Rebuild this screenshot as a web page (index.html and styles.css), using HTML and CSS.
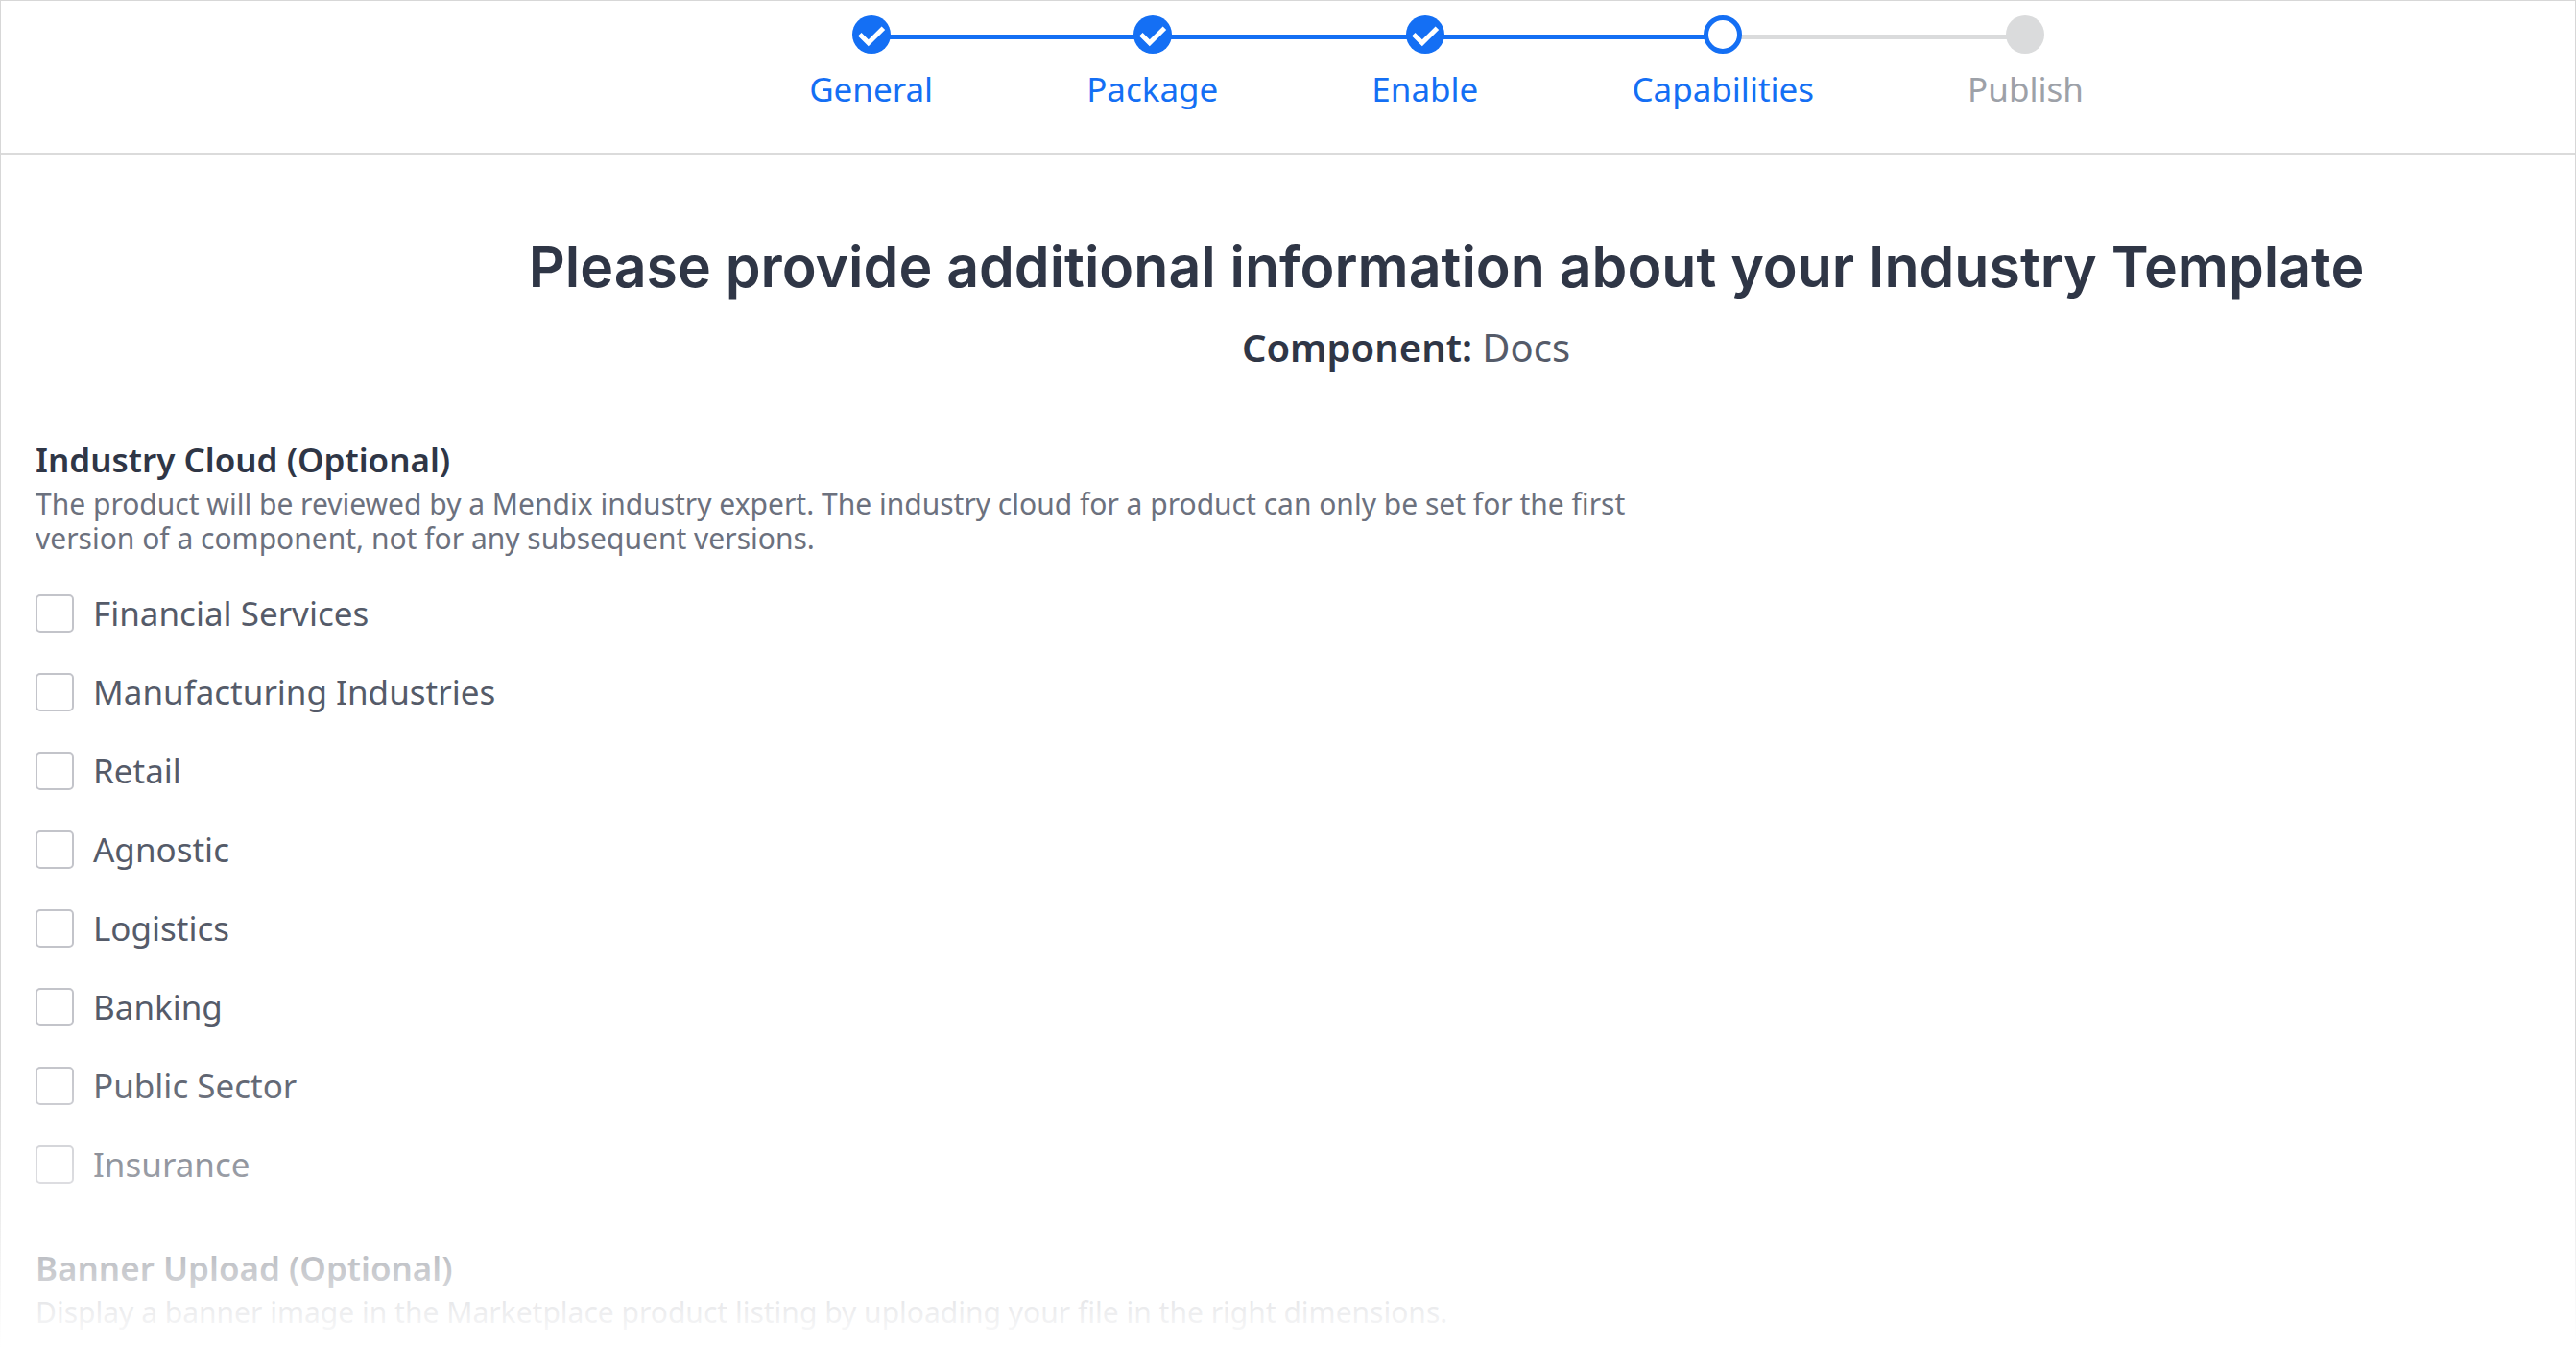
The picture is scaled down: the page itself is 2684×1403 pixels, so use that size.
FILE: index.html
```html
<!DOCTYPE html>
<html lang="en">
<head>
<meta charset="utf-8">
<title>Industry Template - Capabilities</title>
<link rel="stylesheet" href="styles.css">
</head>
<body>
<div class="page">
  <header class="wizard">
    <ol class="steps">
      <li class="step done"><span class="dot"><svg viewBox="0 0 40 40" aria-hidden="true"><path d="M7.8 19.8L16.8 28.8L32.4 13.2" /></svg></span><span class="label">General</span></li>
      <li class="step done"><span class="dot"><svg viewBox="0 0 40 40" aria-hidden="true"><path d="M7.8 19.8L16.8 28.8L32.4 13.2" /></svg></span><span class="label">Package</span></li>
      <li class="step done"><span class="dot"><svg viewBox="0 0 40 40" aria-hidden="true"><path d="M7.8 19.8L16.8 28.8L32.4 13.2" /></svg></span><span class="label">Enable</span></li>
      <li class="step current" aria-current="step"><span class="dot"></span><span class="label">Capabilities</span></li>
      <li class="step todo"><span class="dot"></span><span class="label">Publish</span></li>
    </ol>
  </header>
  <main class="content">
    <div class="intro">
      <h1 class="title">Please provide additional information about your Industry Template</h1>
      <p class="component"><strong>Component:</strong> Docs</p>
    </div>
    <form class="form">
      <fieldset class="group">
        <legend class="heading">Industry Cloud (Optional)</legend>
        <p class="hint">The product will be reviewed by a Mendix industry expert. The industry cloud for a product can only be set for the first version of a component, not for any subsequent versions.</p>
        <div class="options">
          <label class="option"><input type="checkbox" name="industry" value="financial">Financial Services</label>
          <label class="option"><input type="checkbox" name="industry" value="manufacturing">Manufacturing Industries</label>
          <label class="option"><input type="checkbox" name="industry" value="retail">Retail</label>
          <label class="option"><input type="checkbox" name="industry" value="agnostic">Agnostic</label>
          <label class="option"><input type="checkbox" name="industry" value="logistics">Logistics</label>
          <label class="option"><input type="checkbox" name="industry" value="banking">Banking</label>
          <label class="option"><input type="checkbox" name="industry" value="public">Public Sector</label>
          <label class="option"><input type="checkbox" name="industry" value="insurance">Insurance</label>
        </div>
      </fieldset>
      <section class="group">
        <h2 class="heading">Banner Upload (Optional)</h2>
        <p class="hint">Display a banner image in the Marketplace product listing by uploading your file in the right dimensions.</p>
      </section>
    </form>
  </main>
</div>
</body>
</html>
```
FILE: styles.css
```css
* { box-sizing: border-box; }

body {
  margin: 0;
  background: #fff;
  color: #555b69;
  font: 35px/48px "Noto Sans", sans-serif;
}

.page {
  position: relative;
  min-height: 100vh;
  border: 1px solid #d7d7d7;
  border-bottom: 0;
}

/* Fade the foot of the page out to white */
.page::after {
  content: "";
  position: absolute;
  inset: auto -1px 0;
  height: 300px;
  background: linear-gradient(rgba(255, 255, 255, 0), #fff);
  pointer-events: none;
}

.wizard {
  padding: 15px 0 41px 330px;
  border-bottom: 2px solid #dbdbdb;
}

.steps {
  display: flex;
  justify-content: center;
  gap: 160px;
  margin: 0;
  padding: 0;
  list-style: none;
}

.step {
  position: relative;
  display: flex;
  flex-direction: column;
  align-items: center;
  gap: 12px;
  color: #146ff4;
  line-height: 50px;
}

.dot {
  position: relative;
  z-index: 1;
  width: 40px;
  height: 40px;
  border-radius: 50%;
  background: #146ff4;
}

.dot svg {
  display: block;
  fill: none;
  stroke: #fff;
  stroke-width: 5;
}

.current .dot {
  border: 5px solid #146ff4;
  background: #fff;
}

.todo { color: #9da1a8; }
.todo .dot { background: #dadbdc; }

/* Connectors run from each dot to the middle of the gap beside it */
.step::before,
.step::after {
  content: "";
  position: absolute;
  top: 20px;
  height: 5px;
  width: calc(50% + 80px);
  background: #146ff4;
}
.step::before { right: 50%; }
.step::after { left: 50%; }
.step:first-child::before,
.step:last-child::after { display: none; }
.current::after,
.todo::before { background: #dadbdc; }

.intro {
  padding-left: 330px;
  text-align: center;
}

.title {
  margin: 0;
  padding-top: 81px;
  color: #2f3646;
  font: 600 59px/72px Inter, sans-serif;
}

.component {
  margin: 24px 84px 0 0;
  font-size: 40px;
}

.component strong { color: #2f3646; font-weight: 600; }

.form { padding: 69px 36px 0; }

.group {
  margin: 0;
  padding: 0;
  border: 0;
}

.heading {
  margin: 0;
  padding: 0 0 4px;
  color: #2f3646;
  font-size: 35px;
  font-weight: 600;
  line-height: 48px;
}

.hint {
  max-width: 1700px;
  margin: 0;
  color: #6c717e;
  font-size: 30px;
  line-height: 36px;
}

.options {
  display: grid;
  gap: 34px;
  padding: 36px 0 60px;
}

.option {
  display: flex;
  align-items: center;
  gap: 20px;
  justify-self: start;
}

.option input {
  appearance: none;
  width: 40px;
  height: 40px;
  margin: 0;
  border: 2px solid #c3c4ca;
  border-radius: 5px;
  background: #fff;
}
```
